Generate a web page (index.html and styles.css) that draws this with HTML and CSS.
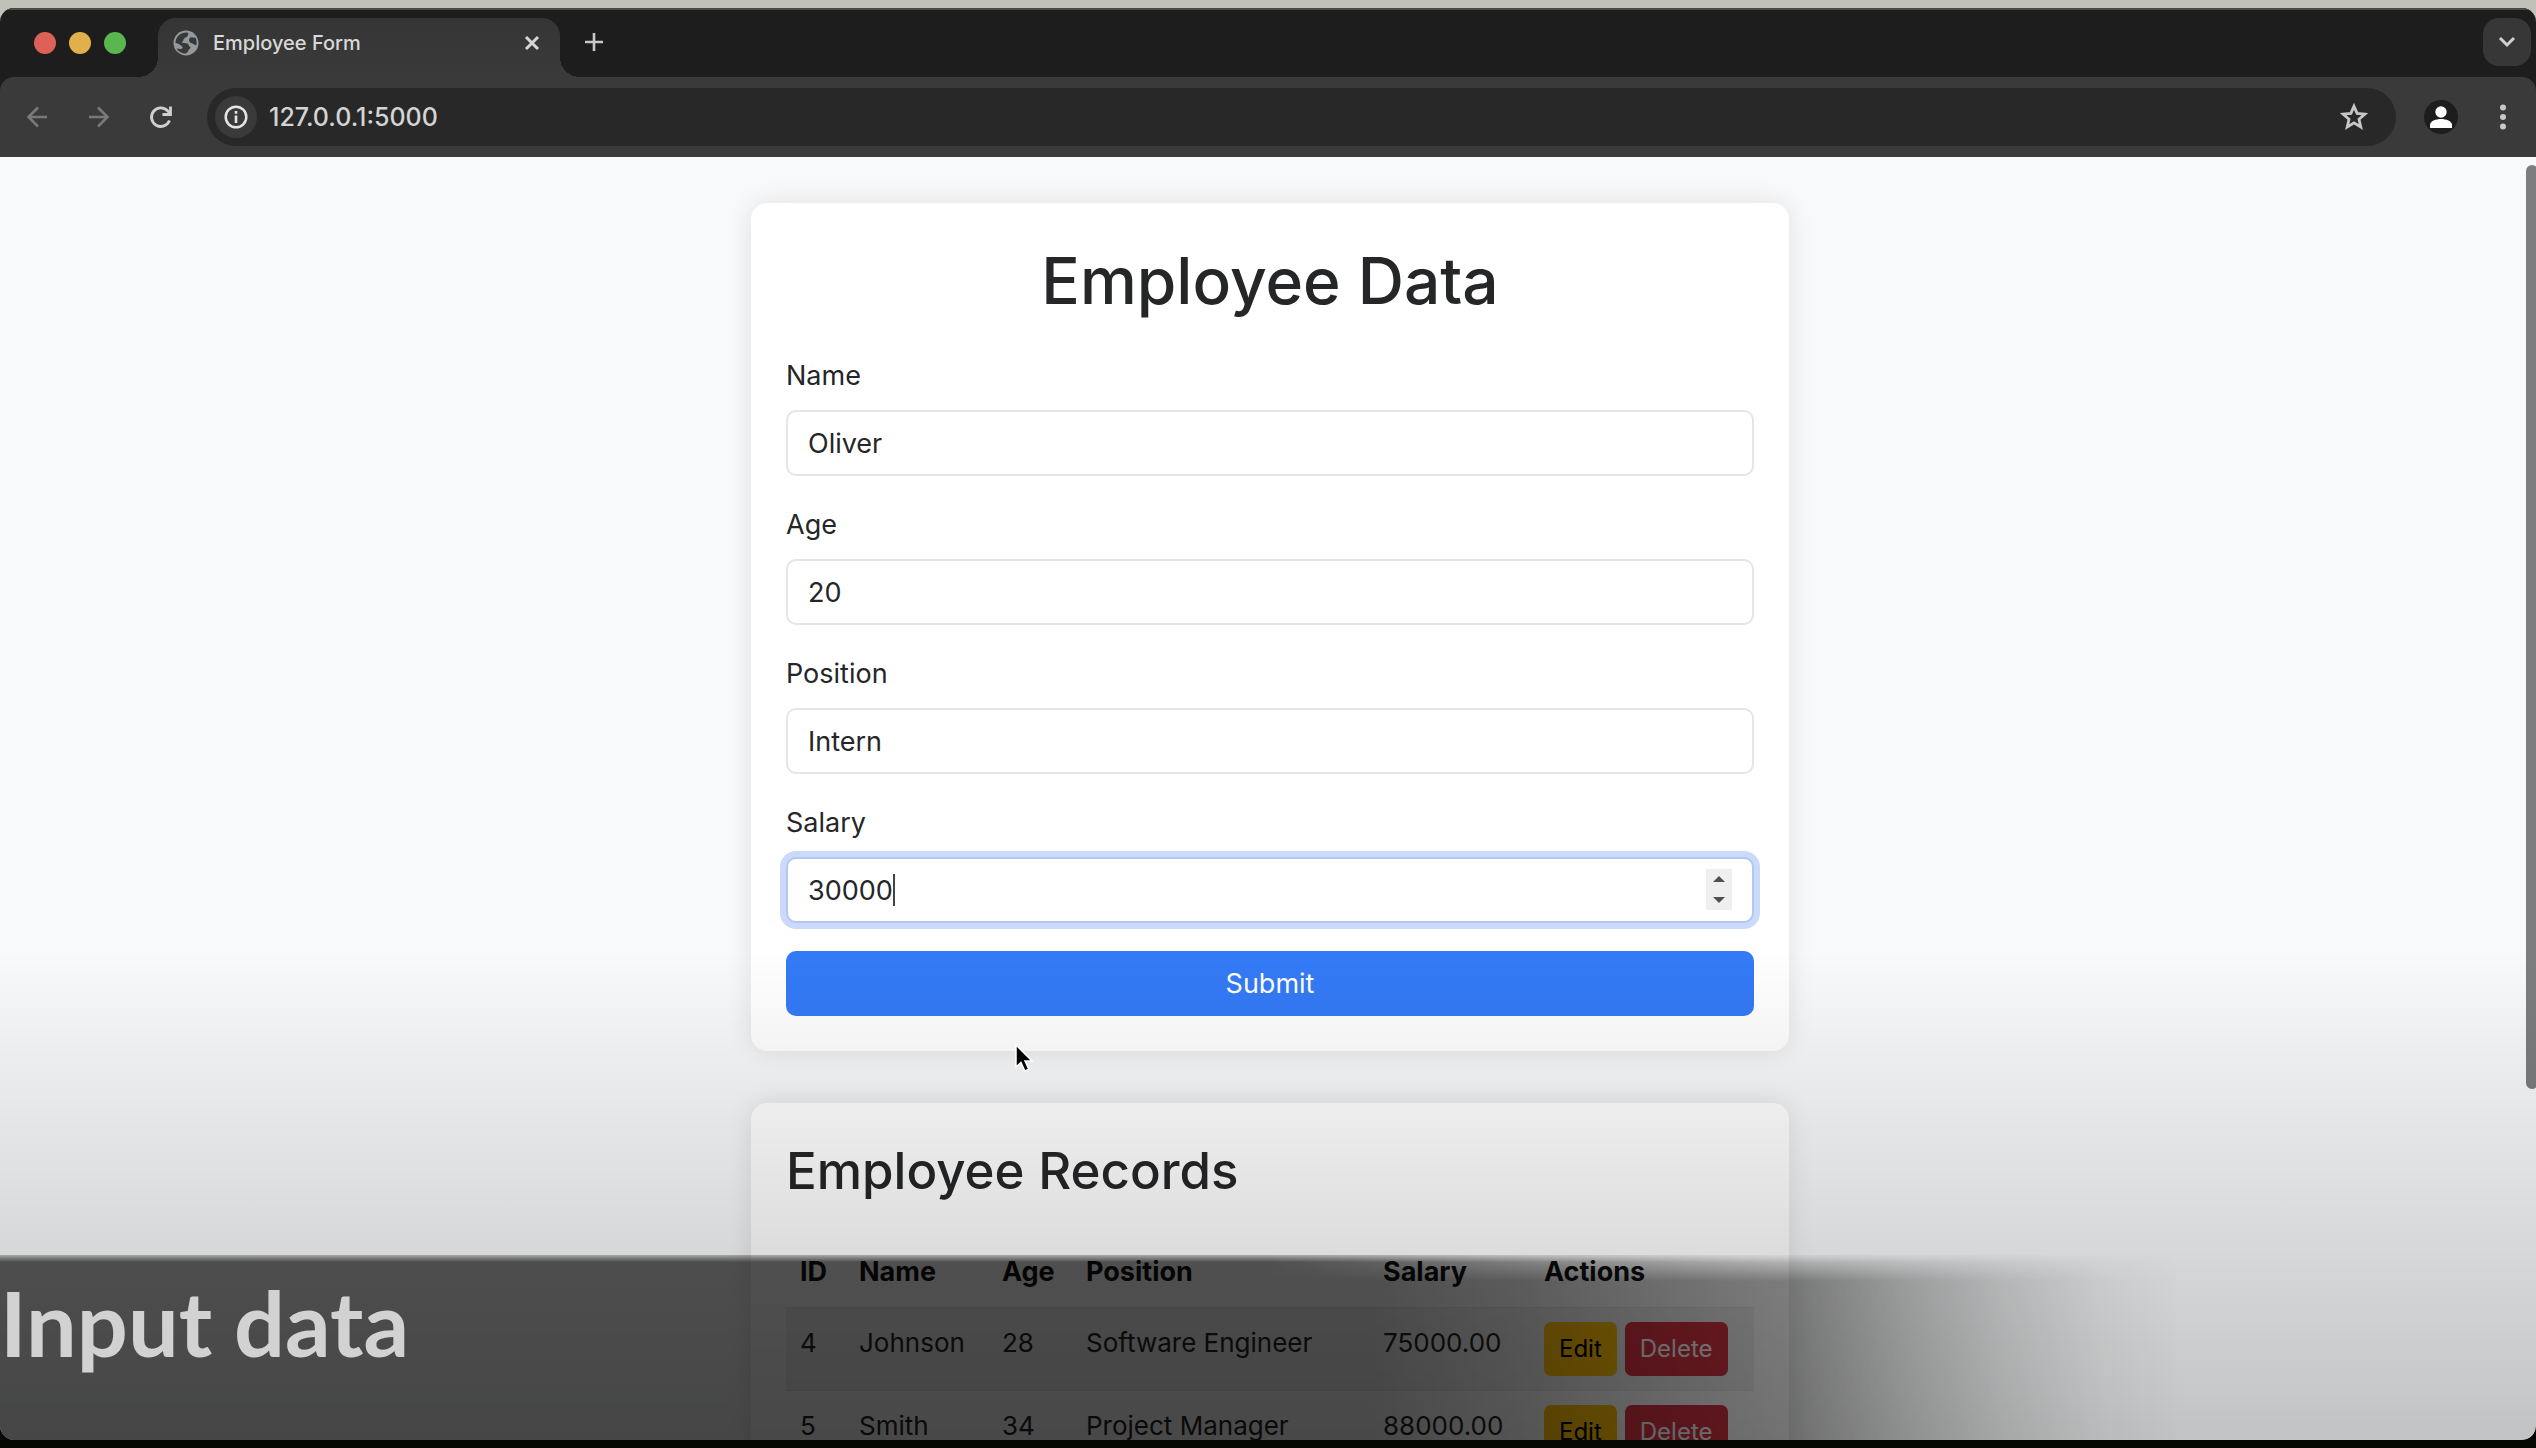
FILE: index.html
```html
<!DOCTYPE html>
<html lang="en">
<head>
<meta charset="utf-8">
<meta name="viewport" content="width=device-width, initial-scale=1">
<title>Employee Form</title>
<link rel="stylesheet" href="styles.css">
</head>
<body>
<div class="window">
  <header class="tabstrip">
    <div class="lights">
      <span class="light light-close"></span>
      <span class="light light-min"></span>
      <span class="light light-max"></span>
    </div>
    <div class="tab">
      <svg class="favicon" viewBox="0 0 26 26" aria-hidden="true"><circle cx="13" cy="13" r="12.5" fill="#94999d"/><path d="M14 2.500c2 .5 1.500 3-.5 4.500-2 1.200-3 1.500-3 3 0 1.200-1.500 1-1.500 2.500 1 1 4.500 0 6 1.500 1 1 .5 2.500 2.500 3 0 2-2 2.500-2.500 4-.3 1.200-1 2.500-3 2.500-3 0-6.500-1.500-8.500-5 2.500.5 5.500 1 6-.5.5-1.700-1.500-2.500-3-3.500-1.500-1-3-1.500-4-1.500C2.500 7 7 2.500 14 2.500zM17.500 7.500c1-.5 3 .5 5 .2 1.200 2.500 1.500 5 1 7.300-1.500.7-2.500-1-4-1.500-2-.5-3.500-1.500-3.500-3 0-1 .5-2.500 1.500-3z" fill="#383838"/></svg>
      <span class="tab-title">Employee Form</span>
      <button class="icon-btn" aria-label="Close tab"><svg width="16" height="16" viewBox="0 0 16 16"><path d="M2 2l12 12M14 2L2 14" stroke="#d6d6d6" stroke-width="3"/></svg></button>
    </div>
    <button class="icon-btn new-tab" aria-label="New tab"><svg width="20" height="20" viewBox="0 0 20 20"><path d="M10 1v18M1 10h18" stroke="#c8c8c8" stroke-width="2.600"/></svg></button>
    <button class="icon-btn tab-search" aria-label="Search tabs"><svg width="18" height="12" viewBox="0 0 18 12"><path d="M2 2l7 7 7-7" fill="none" stroke="#d0d0d0" stroke-width="3"/></svg></button>
  </header>
  <nav class="toolbar">
    <button class="icon-btn nav-btn" aria-label="Back"><svg width="24" height="24" viewBox="0 0 24 24"><path d="M22 12H4M13 2.500L3.500 12l9.500 9.500" fill="none" stroke="#7a7a7a" stroke-width="2.500"/></svg></button>
    <button class="icon-btn nav-btn" aria-label="Forward"><svg width="24" height="24" viewBox="0 0 24 24"><path d="M2 12h18M11 2.500l9.500 9.500-9.500 9.500" fill="none" stroke="#7a7a7a" stroke-width="2.500"/></svg></button>
    <button class="icon-btn nav-btn" aria-label="Reload"><svg width="24" height="24" viewBox="0 0 24 24"><path d="M20.500 15.500A9.300 9.300 0 1 1 18.800 6L21 8.200" fill="none" stroke="#d0d0d0" stroke-width="2.800"/><path d="M21.500 1.500V9.500h-8" fill="none" stroke="#d0d0d0" stroke-width="2.800"/></svg></button>
    <div class="omnibox">
      <button class="icon-btn site-info" aria-label="Site information"><svg width="24" height="24" viewBox="0 0 24 24"><circle cx="12" cy="12" r="10.300" fill="none" stroke="#e4e4e4" stroke-width="2.500"/><path d="M12 10.500V18M12 6v2.700" stroke="#e4e4e4" stroke-width="2.600"/></svg></button>
      <input class="url" type="text" aria-label="Address" value="127.0.0.1:5000">
      <button class="icon-btn" aria-label="Bookmark"><svg width="28" height="28" viewBox="0 0 28 28"><path d="M14 3.200l3.100 7.200 7.900.7-6 5.200 1.800 7.700-6.800-4.100L7.200 24 9 16.300l-6-5.200 7.900-.7z" fill="none" stroke="#c6c6c6" stroke-width="2.800"/></svg></button>
    </div>
    <button class="icon-btn profile" aria-label="Profile"><svg width="34" height="34" viewBox="0 0 34 34"><circle cx="17" cy="17" r="17" fill="#1d1d1d"/><circle cx="17" cy="12" r="5.700" fill="#fff"/><path d="M6 28v-3c0-4 6-6 11-6s11 2 11 6v3z" fill="#fff"/></svg></button>
    <button class="icon-btn" aria-label="Menu"><svg width="8" height="28" viewBox="0 0 8 28"><g fill="#c8c8c8"><circle cx="4" cy="4.500" r="3"/><circle cx="4" cy="14" r="3"/><circle cx="4" cy="23.500" r="3"/></g></svg></button>
  </nav>
  <main class="page">
    <section class="card">
      <h1>Employee Data</h1>
      <form class="form">
        <div class="field"><label for="name">Name</label><input id="name" type="text" value="Oliver"></div>
        <div class="field"><label for="age">Age</label><input id="age" type="number" value="20"></div>
        <div class="field"><label for="position">Position</label><input id="position" type="text" value="Intern"></div>
        <div class="field">
          <label for="salary">Salary</label>
          <div class="control">
            <input id="salary" class="active" type="number" value="30000">
            <span class="caret"></span>
            <span class="spinner">
              <button type="button" aria-label="Increase"><svg width="12" height="6" viewBox="0 0 12 6"><path d="M0 6l6-6 6 6z" fill="#505050"/></svg></button>
              <button type="button" aria-label="Decrease"><svg width="12" height="6" viewBox="0 0 12 6"><path d="M0 0l6 6 6-6z" fill="#505050"/></svg></button>
            </span>
          </div>
        </div>
        <button class="submit" type="submit">Submit</button>
      </form>
    </section>
    <section class="card">
      <h2>Employee Records</h2>
      <table class="records">
        <colgroup><col class="c-id"><col class="c-name"><col class="c-age"><col class="c-position"><col class="c-salary"><col></colgroup>
        <thead>
          <tr><th scope="col">ID</th><th scope="col">Name</th><th scope="col">Age</th><th scope="col">Position</th><th scope="col">Salary</th><th scope="col">Actions</th></tr>
        </thead>
        <tbody>
          <tr><td>4</td><td>Johnson</td><td>28</td><td>Software Engineer</td><td>75000.00</td><td><div class="actions"><button class="edit">Edit</button><button class="delete">Delete</button></div></td></tr>
          <tr><td>5</td><td>Smith</td><td>34</td><td>Project Manager</td><td>88000.00</td><td><div class="actions"><button class="edit">Edit</button><button class="delete">Delete</button></div></td></tr>
        </tbody>
      </table>
    </section>
    <div class="scroll-thumb"></div>
    <div class="shade"></div>
    <div class="caption">
      <div class="caption-bg"></div>
      <p class="caption-text">Input data</p>
    </div>
    <svg class="pointer" width="22" height="32" viewBox="0 0 22 32" aria-hidden="true"><path d="M2 2v22l5-4.500 3.800 8.500 4-1.800L11 18h7z" fill="#000" stroke="#fff" stroke-width="1.500"/></svg>
  </main>
</div>
</body>
</html>
```
FILE: styles.css
```css
* { box-sizing: border-box; }

body {
  margin: 0;
  height: 100vh;
  padding: 8px 0;
  overflow: hidden;
  background: linear-gradient(#c1c0b9 50%, #070703 50%);
  font-family: Inter, "Liberation Sans", sans-serif;
  font-size: 27px;
  color: #252628;
}

button, input { font: inherit; color: inherit; }

.window {
  height: 100%;
  display: flex;
  flex-direction: column;
  overflow: hidden;
  border-radius: 14px;
  background: #1d1d1d;
}

/* Browser chrome */
.icon-btn {
  display: flex;
  align-items: center;
  justify-content: center;
  padding: 0;
  border: 0;
  background: none;
}

.tabstrip {
  display: flex;
  height: 69px;
  flex: none;
  border-top: 2px solid #4c4b43;
  padding-right: 5px;
}

.lights {
  display: flex;
  gap: 13px;
  padding: 22px 0 0 34px;
  width: 158px;
}
.light { width: 22px; height: 22px; border-radius: 50%; }
.light-close { background: #dd6156; }
.light-min { background: #e2b04b; }
.light-max { background: #5ab750; }

.tab {
  position: relative;
  display: flex;
  align-items: center;
  gap: 14px;
  width: 402px;
  margin-top: 8px;
  padding: 0 20px 10px 15px;
  border-radius: 18px 18px 0 0;
  background: linear-gradient(#353535, #3a3a3a);
}
.tab::before, .tab::after {
  content: "";
  position: absolute;
  bottom: 0;
  width: 20px;
  height: 20px;
}
.tab::before { left: -20px; background: radial-gradient(circle at 0 0, transparent 20px, #3a3a3a 20px); }
.tab::after { right: -20px; background: radial-gradient(circle at 100% 0, transparent 20px, #3a3a3a 20px); }
.favicon { width: 26px; height: 26px; }
.tab-title { flex: 1; font-size: 20px; font-weight: 500; color: #d8d8d8; }

.new-tab { width: 20px; height: 20px; margin: 22px 0 0 24px; }
.tab-search {
  width: 48px;
  height: 48px;
  margin: 8px 0 0 auto;
  border-radius: 16px;
  background: #373737;
}

.toolbar {
  display: flex;
  align-items: center;
  flex: none;
  height: 80px;
  padding: 0 29px 0 25px;
  border-radius: 14px 14px 0 0;
  background: #3a3a3a;
}
.nav-btn { width: 24px; margin-right: 38px; }
.omnibox {
  flex: 1;
  display: flex;
  align-items: center;
  gap: 12px;
  height: 58px;
  margin-left: -4px;
  padding: 0 28px 0 8px;
  border-radius: 29px;
  background: #282828;
}
.site-info { width: 42px; height: 42px; border-radius: 50%; background: #3a3a3a; }
.url {
  flex: 1;
  min-width: 0;
  border: 0;
  padding: 0;
  background: none;
  font-size: 25px;
  font-weight: 500;
  color: #d4d4d4;
}
.profile { margin: 0 41px 0 28px; }

/* Page */
.page {
  position: relative;
  flex: 1;
  min-height: 0;
  overflow: hidden;
  padding: 46px 0 0 4px;
  border-radius: 0 0 14px 14px;
  background: #f8f9fa;
}

.card {
  max-width: 1038px;
  margin: 0 auto 52px;
  padding: 35px;
  border-radius: 16px;
  background: #fff;
  box-shadow: 0 0 26px rgba(0, 0, 0, 0.1);
}

h1, h2 { margin: 0; font-weight: 500; }
h1 { margin-bottom: 32px; font-size: 64px; line-height: 85px; text-align: center; }
h2 { margin-bottom: 33px; font-size: 51px; line-height: 66px; }

.form { display: flex; flex-direction: column; gap: 28px; }
.field { display: flex; flex-direction: column; gap: 13px; }
.field label { line-height: 42px; }
.field input {
  width: 100%;
  height: 66px;
  padding: 0 20px;
  border: 2px solid #e3e5e7;
  border-radius: 10px;
  background: #fff;
  outline: 0;
  appearance: textfield;
}
.field input::-webkit-inner-spin-button { display: none; }
.field .active {
  border-color: #b3c8f0;
  box-shadow: 0 0 0 6px #cbdafa;
  caret-color: transparent;
}
.control { position: relative; }
.caret {
  position: absolute;
  top: 17px;
  left: calc(22px + 5ch);
  width: 2px;
  height: 32px;
  background: #444;
}
.spinner {
  position: absolute;
  top: 12px;
  right: 22px;
  display: flex;
  flex-direction: column;
  width: 26px;
  height: 41px;
  background: #efefef;
}
.spinner button {
  flex: 1;
  display: flex;
  align-items: center;
  justify-content: center;
  border: 0;
  padding: 0;
  background: none;
}

.submit {
  height: 65px;
  border: 0;
  border-radius: 10px;
  background: #347af6;
  color: #fff;
}

.records { width: 100%; table-layout: fixed; border-collapse: collapse; }
.c-id { width: 59px; }
.c-name { width: 143px; }
.c-age { width: 84px; }
.c-position { width: 297px; }
.c-salary { width: 161px; }
.records th, .records td {
  padding: 14px;
  border-bottom: 1px solid #e6e8ea;
  line-height: 42px;
  text-align: left;
  vertical-align: top;
  white-space: nowrap;
}
.records th { font-weight: 700; color: #111; }
.records td { font-size: 26px; }
.records tbody tr:nth-child(odd) { background: #f2f2f2; }
.actions { display: flex; gap: 8px; }
.actions button {
  height: 54px;
  padding: 0 15px;
  border: 0;
  border-radius: 7px;
  font-size: 24px;
}
.edit { background: #ffc107; color: #000; }
.delete { background: #dc3545; color: #fff; }

/* Layers over the page */
.scroll-thumb {
  position: absolute;
  top: 8px;
  right: -2px;
  width: 12px;
  height: 72%;
  border-radius: 6px;
  background: #7b7d7e;
}
.shade {
  position: absolute;
  inset: auto 0 0;
  height: 490px;
  background: linear-gradient(transparent, rgba(0, 0, 0, 0.22));
}
.caption {
  position: absolute;
  inset: auto 0 0;
  height: 185px;
  mask-image: linear-gradient(transparent -4px, #000 7px);
}
.caption-bg {
  position: absolute;
  inset: 0;
  background: linear-gradient(to right,
    rgba(0, 0, 0, 0.64) 54%,
    rgba(0, 0, 0, 0.58) 60%,
    rgba(0, 0, 0, 0.42) 71%,
    rgba(0, 0, 0, 0.27) 75%,
    rgba(0, 0, 0, 0.14) 79%,
    rgba(0, 0, 0, 0.04) 83%,
    transparent 86%);
  mask-image: linear-gradient(to right, #000 50%, transparent 70%), linear-gradient(transparent -8px, #000 26px);
}
.caption-text {
  position: relative;
  margin: 0;
  padding-top: 12px;
  font-family: Lato, "Open Sans", sans-serif;
  font-size: 90px;
  font-weight: 700;
  line-height: 110px;
  color: #d2d2d2;
}
.pointer { position: absolute; left: 40%; top: 886px; }
```
